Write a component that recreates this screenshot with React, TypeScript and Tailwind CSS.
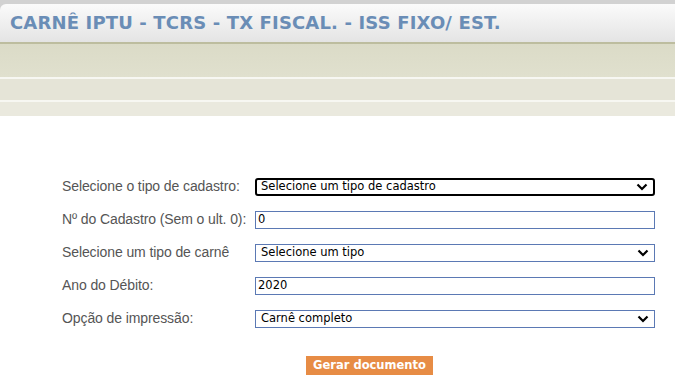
import React from 'react';

const rows = [
  { label: 'Selecione o tipo de cadastro:', kind: 'select', value: 'Selecione um tipo de cadastro', focus: true },
  { label: 'Nº do Cadastro (Sem o ult. 0):', kind: 'input', value: '0' },
  { label: 'Selecione um tipo de carnê', kind: 'select', value: 'Selecione um tipo' },
  { label: 'Ano do Débito:', kind: 'input', value: '2020' },
  { label: 'Opção de impressão:', kind: 'select', value: 'Carnê completo' },
];

const Chevron = () => (
  <svg width="12" height="8" viewBox="0 0 12 8" className="absolute right-[5px] top-1/2 -translate-y-1/2">
    <path d="M1.5 1.5 L6 6 L10.5 1.5" fill="none" stroke="#000" strokeWidth="2.2" />
  </svg>
);

const App: React.FC = () => {
  return (
    <div className="w-[675px] h-[388px] bg-white overflow-hidden font-['Liberation_Sans',Arial,sans-serif]">
      <div className="h-[4px] bg-[#d2d2d2]" />
      <div className="bg-[#d2d2d2]">
        <div className="h-[38px] rounded-tl-[6px] bg-gradient-to-b from-[#fbfbfb] to-[#e4e4e4] flex items-center pl-[10px]">
          <h1 className="text-[18px] font-bold text-[#6a8db6] font-['DejaVu_Sans',Verdana,sans-serif] tracking-[0.15px] leading-none pb-[1px]">
            CARNÊ IPTU - TCRS - TX FISCAL. - ISS FIXO/ EST.
          </h1>
        </div>
      </div>
      <div className="h-[2px] bg-[#bdbd9f]" />
      <div className="h-[33px] bg-gradient-to-b from-[#dbdbc7] to-[#e0e0ce]" />
      <div className="h-[2px] bg-[#f7f7f2]" />
      <div className="h-[21px] bg-[#e5e4d7]" />
      <div className="h-[2px] bg-[#f7f7f2]" />
      <div className="h-[14px] bg-[#eae9de]" />

      <div className="pt-[54px] pl-[62px]">
        {rows.map((r) => (
          <div key={r.label} className="h-[33px] flex items-center">
            <label className="w-[193px] text-[14px] text-[#555] leading-none pb-[1px] tracking-[-0.1px]">{r.label}</label>
            <div
              className={`relative w-[400px] h-[18px] bg-white flex items-center font-['DejaVu_Sans',Verdana,sans-serif] text-[11.5px] text-black ${
                r.focus
                  ? 'border-2 border-black rounded-[3px] pl-[4px]'
                  : r.kind === 'select'
                  ? 'border border-[#5b79b4] pl-[5px]'
                  : 'border border-[#5b79b4] pl-[2px]'
              }`}
            >
              <span className="leading-none">{r.value}</span>
              {r.kind === 'select' && <Chevron />}
            </div>
          </div>
        ))}
        <div className="pl-[244px] pt-[17px]">
          <button className="w-[127px] h-[19px] bg-[#e78c45] text-white font-bold text-[11.5px] font-['DejaVu_Sans',Verdana,sans-serif] leading-none">
            Gerar documento
          </button>
        </div>
      </div>
    </div>
  );
};

export default App;
